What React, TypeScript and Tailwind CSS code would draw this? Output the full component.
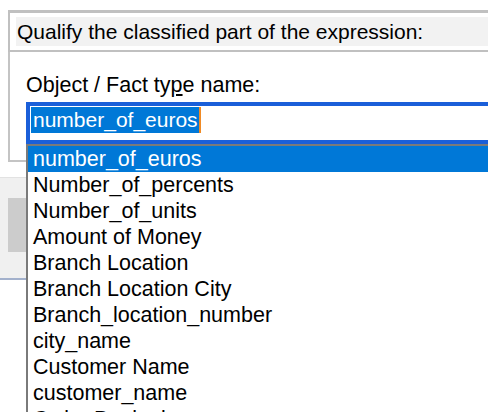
import React from 'react';

const items = [
  'number_of_euros',
  'Number_of_percents',
  'Number_of_units',
  'Amount of Money',
  'Branch Location',
  'Branch Location City',
  'Branch_location_number',
  'city_name',
  'Customer Name',
  'customer_name',
  'Order Beginning',
];

export default function App() {
  return (
    <div className="relative w-[488px] h-[412px] overflow-hidden bg-white text-black font-['Liberation_Sans',Arial,sans-serif]">
      {/* dialog behind the popup */}
      <div className="pt-[10px] pl-[8px]">
        <div className="border-t-[3px] border-l-2 border-b-2 border-[#c0c0c0] py-[4px] pl-[6px]">
          <div className="h-[29px] bg-[#f2f2f2] pl-[1px] text-[21px] leading-[30px] whitespace-nowrap">
            Qualify the classified part of the expression:
          </div>
        </div>
        <div className="h-[110px] border-l-2 border-b-2 border-[#c4c4c4] pl-[16px] pt-[21px]">
          <div className="text-[21.5px] leading-[24px] whitespace-nowrap">
            Object / Fact ty<span className="underline underline-offset-2">p</span>e name:
          </div>
          <div className="mt-[5px] w-[520px] h-[42px] border-4 border-[#1a5fd9] bg-white pl-[1px] pt-[1px]">
            <div className="flex items-stretch h-[26px]">
              <span className="bg-[#0078d7] text-white text-[21px] leading-[26px] pl-[2px] pr-[1px] whitespace-nowrap">
                number_of_euros
              </span>
              <span className="w-[2px] bg-[#f08a24]" />
            </div>
          </div>
        </div>
      </div>
      <div className="h-[15px] bg-white" />
      <div className="h-[101px] border-t border-[#e2e2e2] bg-[#f0f0f0] pt-[20px] pl-[8px]">
        <div className="w-[40px] h-[54px] bg-[#cccccc]" />
      </div>
      <div className="border-t-2 border-[#a3b1cc] bg-white h-[140px]" />

      {/* dropdown list */}
      <div className="absolute left-[26px] top-[144px] right-0 bottom-0 border-l-2 border-t-2 border-[#7a7a7a] bg-white">
        {items.map((item, i) => (
          <div
            key={item}
            className={
              i === 0
                ? 'h-[26px] pl-[5px] text-[21.5px] leading-[26px] whitespace-nowrap bg-[#0078d7] text-white'
                : 'h-[26px] pl-[5px] text-[21.5px] leading-[26px] whitespace-nowrap'
            }
          >
            {item}
          </div>
        ))}
      </div>
    </div>
  );
}
